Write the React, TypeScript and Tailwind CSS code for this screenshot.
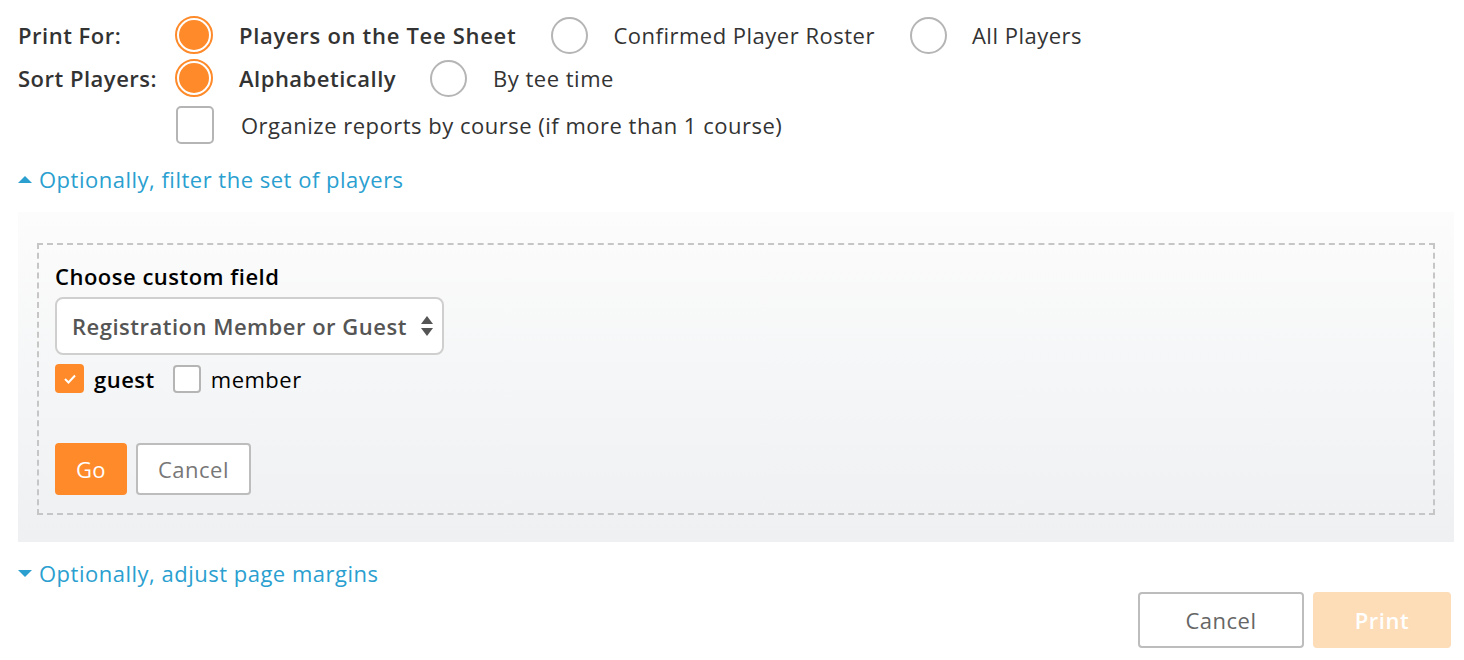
import { useState } from 'react'

const font = { fontFamily: '"Open Sans", Lato, sans-serif' }

const Radio = ({ checked }: { checked: boolean }) =>
  checked ? (
    <span className="flex h-[38px] w-[38px] shrink-0 items-center justify-center rounded-full border-2 border-[#ff8a2a] bg-white">
      <span className="h-[30px] w-[30px] rounded-full bg-[#ff8a2a]" />
    </span>
  ) : (
    <span className="block h-[37px] w-[37px] shrink-0 rounded-full border-2 border-[#b5b5b5] bg-white" />
  )

const Caret = ({ up }: { up: boolean }) => (
  <svg width="14" height="9" viewBox="0 0 14 9" className="mr-[7px]">
    {up ? <path d="M0 8 L7 1 L14 8 Z" fill="#2a9fd0" /> : <path d="M0 1 L14 1 L7 8 Z" fill="#2a9fd0" />}
  </svg>
)

export default function App() {
  const [guest, setGuest] = useState(true)
  const [member, setMember] = useState(false)

  return (
    <div style={font} className="h-[660px] w-[1464px] bg-white text-[22px] leading-[26px] tracking-[0.5px] text-[#333]">
      <div className="flex flex-col pl-[18px] pt-[16px]">
        <div className="flex h-[38px] items-center">
          <span className="w-[157px] font-semibold">Print For:</span>
          <Radio checked />
          <span className="ml-[26px] font-semibold tracking-[0.7px]">Players on the Tee Sheet</span>
          <span className="ml-[35px] flex"><Radio checked={false} /></span>
          <span className="ml-[25px]">Confirmed Player Roster</span>
          <span className="ml-[35px] flex"><Radio checked={false} /></span>
          <span className="ml-[25px]">All Players</span>
        </div>
        <div className="mt-[5px] flex h-[38px] items-center">
          <span className="w-[157px] font-semibold">Sort Players:</span>
          <Radio checked />
          <span className="ml-[26px] font-semibold">Alphabetically</span>
          <span className="ml-[34px] flex"><Radio checked={false} /></span>
          <span className="ml-[26px]">By tee time</span>
        </div>
        <div className="mt-[9px] flex h-[38px] items-center pl-[158px]">
          <span className="h-[38px] w-[38px] rounded-[5px] border-2 border-[#b5b5b5] bg-white" />
          <span className="ml-[27px]">Organize reports by course (if more than 1 course)</span>
        </div>
        <div className="mt-[22px] flex items-center text-[#2a9fd0]">
          <Caret up />
          <span>Optionally, filter the set of players</span>
        </div>
      </div>

      <div className="ml-[18px] mr-[10px] mt-[20px] bg-gradient-to-b from-[#fcfcfc] to-[#eef0f2] px-[19px] pb-[27px] pt-[31px]">
        <div className="flex flex-col border-2 border-dashed border-[#c6c6c6] px-[16px] pb-[18px] pt-[18px]">
          <span className="font-semibold text-black">Choose custom field</span>
          <div className="mt-[8px] flex h-[58px] w-[389px] items-center justify-between rounded-[8px] border-2 border-[#cfcfcf] bg-white pl-[15px] pr-[9px]">
            <span className="font-semibold text-[#555]">Registration Member or Guest</span>
            <svg width="12" height="24" viewBox="0 0 12 24">
              <path d="M0 10 L6 2 L12 10 Z" fill="#555" />
              <path d="M0 14 L12 14 L6 22 Z" fill="#555" />
            </svg>
          </div>
          <div className="mt-[9px] flex items-center">
            <button
              onClick={() => setGuest(!guest)}
              className={`flex h-[29px] w-[29px] items-center justify-center rounded-[4px] ${guest ? 'bg-[#ff8a2a]' : 'border-2 border-[#b5b5b5] bg-white'}`}
            >
              {guest && (
                <svg width="14" height="12" viewBox="0 0 14 12">
                  <path d="M2 6 L5.5 9.5 L12 2.5" stroke="white" strokeWidth="2" fill="none" />
                </svg>
              )}
            </button>
            <span className="ml-[10px] font-semibold text-black">guest</span>
            <button
              onClick={() => setMember(!member)}
              className={`ml-[18px] h-[28px] w-[28px] rounded-[4px] border-2 ${member ? 'border-[#ff8a2a] bg-[#ff8a2a]' : 'border-[#b5b5b5] bg-white'}`}
            />
            <span className="ml-[10px] text-black">member</span>
          </div>
          <div className="mt-[50px] flex gap-[9px]">
            <button className="h-[52px] w-[72px] rounded-[4px] bg-[#ff8a2a] font-medium text-white">Go</button>
            <button className="h-[52px] w-[115px] rounded-[4px] border-2 border-[#bdbdbd] bg-white text-[#777]">Cancel</button>
          </div>
        </div>
      </div>

      <div className="ml-[18px] mt-[18px] flex items-center text-[#2a9fd0]">
        <Caret up={false} />
        <span>Optionally, adjust page margins</span>
      </div>
      <div className="mr-[13px] mt-[6px] flex justify-end gap-[9px]">
        <button className="h-[56px] w-[166px] rounded-[4px] border-2 border-[#bdbdbd] bg-white text-[#666]">Cancel</button>
        <button className="h-[56px] w-[138px] rounded-[4px] bg-[#fddcb8] font-semibold text-white">Print</button>
      </div>
    </div>
  )
}
